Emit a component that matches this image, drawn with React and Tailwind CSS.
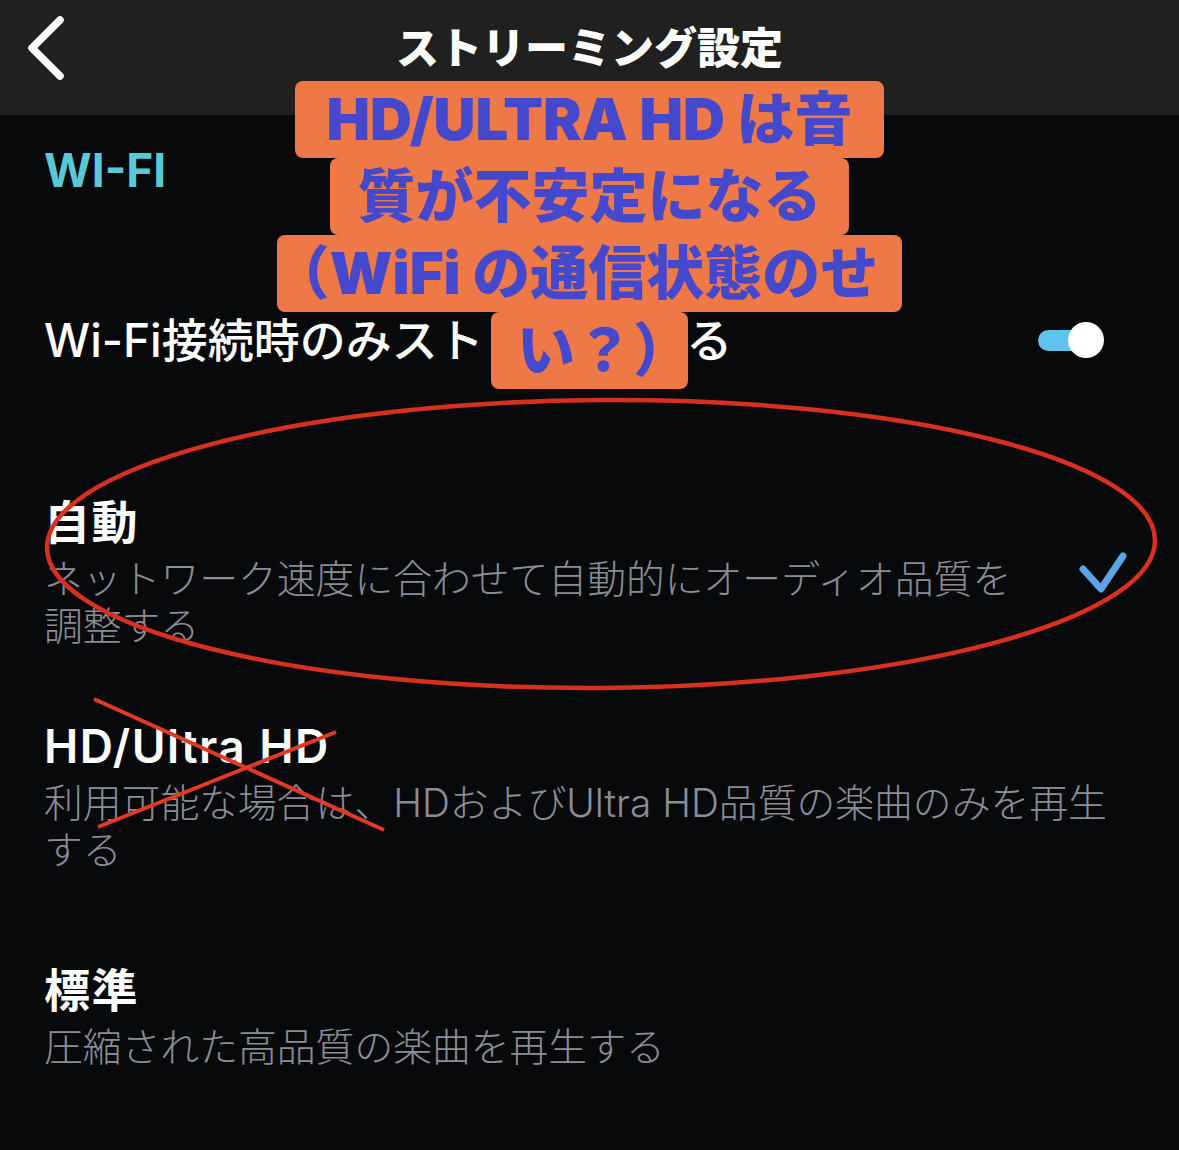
import React from "react";

const FONT = "[font-family:Inter,'Noto_Sans_CJK_JP',sans-serif]";

const OPTIONS = [
    {
        id: "auto",
        title: "自動",
        lines: ["ネットワーク速度に合わせて自動的にオーディオ品質を", "調整する"],
        checked: true,
        mt: "mt-[104px]"
    },
    {
        id: "hd",
        title: "HD/Ultra HD",
        lines: ["利用可能な場合は、HDおよびUltra HD品質の楽曲のみを再生", "する"],
        checked: false,
        mt: "mt-[69px]"
    },
    {
        id: "standard",
        title: "標準",
        lines: ["圧縮された高品質の楽曲を再生する"],
        checked: false,
        mt: "mt-[89px]"
    }
];

const Toggle = () => (
    <div className="relative w-[66px] h-[36px] shrink-0">
        <div className="absolute left-0 top-[8px] w-[48px] h-[21px] rounded-full bg-[#5ec4ef]"></div>
        <div className="absolute right-0 top-0 w-[36px] h-[36px] rounded-full bg-white"></div>
    </div>
);

const Check = () => (
    <svg width="52" height="48" viewBox="0 0 52 48" className="shrink-0">
        <path d="M6 21 L24 41 L46 8" fill="none" stroke="#5ba4e8" strokeWidth="7" strokeLinecap="round" strokeLinejoin="round" />
    </svg>
);

const OptionRow = ({ option }) => (
    <div className={`${option.mt} flex items-center`}>
        <div className="flex-1">
            <div className="text-[46px] leading-[56px] font-semibold tracking-[1.5px] text-white">{option.title}</div>
            <div className="mt-[5px] text-[38.8px] leading-[47px] font-light text-[#8a8d96] whitespace-nowrap">
                {option.lines.map((line) => (
                    <div key={line}>{line}</div>
                ))}
            </div>
        </div>
        {option.checked && (
            <div className="mr-[14px]">
                <Check />
            </div>
        )}
    </div>
);

// orange caption pasted over the screenshot
const Caption = () => {
    const box = "bg-[#ee7846] rounded-[8px] h-[77px] leading-[77px] whitespace-nowrap";
    const half = "[font-feature-settings:'halt']";
    return (
        <div className="absolute left-0 right-0 top-[81px] flex flex-col items-center text-[58px] font-black text-[#4448cc] pointer-events-none">
            <div className={`${box} px-[32px]`}>HD/ULTRA HD は音</div>
            <div className={`${box} px-[27px]`}>質が不安定になる</div>
            <div className={`${box} px-[24px]`}>
                <span className={half}>（</span>WiFi の通信状態のせ
            </div>
            <div className={`${box} px-[26px]`}>
                い？<span className={half}>）</span>
            </div>
        </div>
    );
};

const Marks = () => (
    <svg className="absolute left-0 top-0 pointer-events-none" width="1179" height="1150" viewBox="0 0 1179 1150">
        <ellipse cx="601" cy="544" rx="554" ry="144" fill="none" stroke="#d7301f" strokeWidth="4.5" transform="rotate(-0.4 601 544)" />
        <line x1="94" y1="699" x2="384" y2="830" stroke="#e03a24" strokeWidth="4" />
        <line x1="336" y1="732" x2="98" y2="827" stroke="#e03a24" strokeWidth="4" />
    </svg>
);

export default function App() {
    return (
        <div className={`relative w-[1179px] h-[1150px] overflow-hidden bg-[#08090b] ${FONT}`}>
            <header className="h-[115px] bg-[#202020] pb-[19px]">
                <div className="relative h-[96px] flex items-center justify-center">
                    <svg className="absolute left-[24px] top-[12px]" width="46" height="72" viewBox="0 0 46 72">
                        <path d="M36 8 L8 36 L36 64" fill="none" stroke="white" strokeWidth="7.5" strokeLinecap="round" strokeLinejoin="round" />
                    </svg>
                    <h1 className="text-[43px] font-black text-white">ストリーミング設定</h1>
                </div>
            </header>

            <main className="pl-[44px] pr-[36px]">
                <div className="mt-[27px] h-[56px] leading-[56px] text-[46px] font-bold text-[#5bc8d6]">WI-FI</div>

                <div className="mt-[92px] h-[100px] flex items-center">
                    <div className="flex-1 text-[46px] font-medium text-white whitespace-nowrap">
                        Wi-Fi接続時のみスト<span className="tracking-[5px] text-[#08090b]">リームす</span>る
                    </div>
                    <div className="mr-[39px]">
                        <Toggle />
                    </div>
                </div>

                {OPTIONS.map((option) => (
                    <OptionRow key={option.id} option={option} />
                ))}
            </main>

            <Caption />
            <Marks />
        </div>
    );
}
